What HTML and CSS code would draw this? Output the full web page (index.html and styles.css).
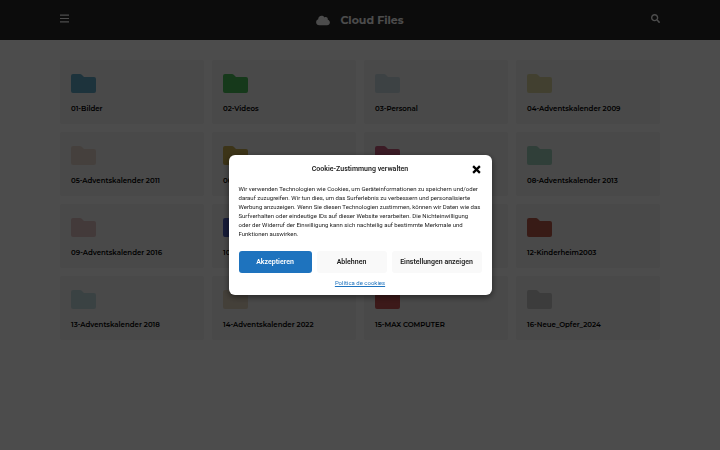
FILE: index.html
```html
<!DOCTYPE html>
<html lang="de">
<head>
<meta charset="utf-8">
<meta name="viewport" content="width=device-width, initial-scale=1">
<title>Cloud Files</title>
<link rel="stylesheet" href="styles.css">
</head>
<body>
<svg class="symbols" aria-hidden="true">
  <symbol id="folder" viewBox="0 0 25 19"><path d="M2 0H9Q10 0 10.700 .7L13 3H23Q25 3 25 5V17Q25 19 23 19H2Q0 19 0 17V2Q0 0 2 0Z"/></symbol>
</svg>
<header class="topbar">
  <div class="topbar-inner">
    <button class="icon-button" type="button" aria-label="Menu"><svg class="menu-icon" viewBox="0 0 8 8"><path d="M0 1H8M0 4H8M0 7H8"/></svg></button>
    <a class="brand" href="#"><svg class="cloud" viewBox="0 0 640 512"><path d="M537.600 226.600c4.100-10.700 6.400-22.400 6.400-34.600 0-53-43-96-96-96-19.700 0-38.100 6-53.300 16.200C367 64.200 315.300 32 256 32c-88.400 0-160 71.600-160 160 0 2.700.1 5.400.2 8.100C40.200 219.800 0 273.200 0 336c0 79.500 64.500 144 144 144h368c70.700 0 128-57.300 128-128 0-61.900-44-113.600-102.400-125.400z"/></svg><span>Cloud Files</span></a>
    <button class="icon-button" type="button" aria-label="Search"><svg class="search-icon" viewBox="0 0 512 512"><path d="M505 442.700L405.300 343c-4.500-4.500-10.600-7-17-7H372c27.600-35.300 44-79.700 44-128C416 93.100 322.900 0 208 0S0 93.100 0 208s93.100 208 208 208c48.300 0 92.700-16.400 128-44v16.300c0 6.400 2.500 12.500 7 17l99.700 99.700c9.400 9.400 24.600 9.400 33.900 0l28.300-28.300c9.400-9.400 9.400-24.600.1-34zM208 336c-70.700 0-128-57.200-128-128 0-70.700 57.200-128 128-128 70.700 0 128 57.200 128 128 0 70.700-57.200 128-128 128z"/></svg></button>
  </div>
</header>
<main class="files">
  <a class="card blue" href="#"><svg class="folder"><use href="#folder"/></svg><span>01-Bilder</span></a>
  <a class="card green" href="#"><svg class="folder"><use href="#folder"/></svg><span>02-Videos</span></a>
  <a class="card ice" href="#"><svg class="folder"><use href="#folder"/></svg><span>03-Personal</span></a>
  <a class="card yellow" href="#"><svg class="folder"><use href="#folder"/></svg><span>04-Adventskalender 2009</span></a>
  <a class="card peach" href="#"><svg class="folder"><use href="#folder"/></svg><span>05-Adventskalender 2011</span></a>
  <a class="card gold" href="#"><svg class="folder"><use href="#folder"/></svg><span>06-Adventskalender</span></a>
  <a class="card pink" href="#"><svg class="folder"><use href="#folder"/></svg><span>07-Adventskalender</span></a>
  <a class="card mint" href="#"><svg class="folder"><use href="#folder"/></svg><span>08-Adventskalender 2013</span></a>
  <a class="card rose" href="#"><svg class="folder"><use href="#folder"/></svg><span>09-Adventskalender 2016</span></a>
  <a class="card indigo" href="#"><svg class="folder"><use href="#folder"/></svg><span>10-Adventskalender</span></a>
  <a class="card ice" href="#"><svg class="folder"><use href="#folder"/></svg><span>11-Adventskalender</span></a>
  <a class="card brick" href="#"><svg class="folder"><use href="#folder"/></svg><span>12-Kinderheim2003</span></a>
  <a class="card aqua" href="#"><svg class="folder"><use href="#folder"/></svg><span>13-Adventskalender 2018</span></a>
  <a class="card sand" href="#"><svg class="folder"><use href="#folder"/></svg><span>14-Adventskalender 2022</span></a>
  <a class="card red" href="#"><svg class="folder"><use href="#folder"/></svg><span>15-MAX COMPUTER</span></a>
  <a class="card gray" href="#"><svg class="folder"><use href="#folder"/></svg><span>16-Neue_Opfer_2024</span></a>
</main>
<div class="overlay">
  <section class="consent" role="dialog" aria-modal="true" aria-labelledby="consent-title">
    <div class="consent-head">
      <h2 id="consent-title">Cookie-Zustimmung verwalten</h2>
      <button class="close" type="button" aria-label="Schließen"><svg viewBox="0 0 8 8"><path d="M1 1L7 7M7 1L1 7"/></svg></button>
    </div>
    <p>Wir verwenden Technologien wie Cookies, um Geräteinformationen zu speichern und/oder darauf zuzugreifen. Wir tun dies, um das Surferlebnis zu verbessern und personalisierte Werbung anzuzeigen. Wenn Sie diesen Technologien zustimmen, können wir Daten wie das Surfverhalten oder eindeutige IDs auf dieser Website verarbeiten. Die Nichteinwilligung oder der Widerruf der Einwilligung kann sich nachteilig auf bestimmte Merkmale und Funktionen auswirken.</p>
    <div class="actions">
      <button class="primary" type="button">Akzeptieren</button>
      <button type="button">Ablehnen</button>
      <button type="button">Einstellungen anzeigen</button>
    </div>
    <a class="policy" href="#">Política de cookies</a>
  </section>
</div>
</body>
</html>
```
FILE: styles.css
```css
* { box-sizing: border-box; }

body {
  margin: 0;
  background: #fff;
  color: #111;
  font-family: Montserrat, Inter, sans-serif;
}

button {
  border: 0;
  padding: 0;
  background: none;
  color: inherit;
  font: inherit;
}

a { color: inherit; text-decoration: none; }

svg { display: block; }

.symbols { display: none; }

.topbar {
  padding: 0 60px;
  background: #282828;
  color: #fff;
}

.topbar-inner {
  display: flex;
  justify-content: space-between;
  max-width: 1200px;
  height: 40px;
  margin: 0 auto;
  padding-top: 14px;
}

.icon-button { align-self: flex-start; }

.menu-icon {
  width: 9px;
  height: 9px;
  fill: none;
  stroke: currentColor;
}

.search-icon { width: 9px; height: 9px; fill: currentColor; }

.brand {
  display: flex;
  align-items: center;
  align-self: flex-start;
  gap: 10px;
  font-size: 11px;
  line-height: 12px;
  font-weight: 700;
}

.cloud { width: 14px; height: 11px; fill: currentColor; }

.files {
  display: grid;
  grid-template-columns: repeat(4, minmax(0, 1fr));
  gap: 8px;
  max-width: 1320px;
  margin: 0 auto;
  padding: 20px 60px;
}

.card {
  display: flex;
  flex-direction: column;
  align-items: flex-start;
  gap: 11px;
  padding: 14px 11px 10px;
  border-radius: 2px;
  background: #f3f3f3;
  font-size: 7px;
  line-height: 10px;
  font-weight: 600;
}

.folder { width: 25px; height: 19px; fill: currentColor; }
.card span { color: #000; }

.blue { color: #62aac8; }
.green { color: #4cbe5a; }
.ice { color: #cbdde5; }
.yellow { color: #dcd8a0; }
.peach { color: #e8d8ce; }
.gold { color: #c9ae50; }
.pink { color: #c55c7e; }
.mint { color: #a2d2be; }
.rose { color: #e2c2c2; }
.indigo { color: #4e5ebd; }
.brick { color: #bd5c4c; }
.aqua { color: #c4dde2; }
.sand { color: #e4d6c0; }
.red { color: #c95454; }
.gray { color: #c8c8c8; }

.overlay {
  position: fixed;
  inset: 0;
  display: flex;
  align-items: center;
  justify-content: center;
  background: rgba(0, 0, 0, .7);
}

.consent {
  width: 263px;
  padding: 9px 10px 8px;
  border-radius: 6px;
  background: #fff;
  box-shadow: 0 2px 6px rgba(0, 0, 0, .5);
  color: #222;
  font-family: Roboto, sans-serif;
}

.consent-head {
  display: grid;
  grid-template-columns: 10px 1fr 10px;
  align-items: center;
  height: 10px;
}

.consent h2 {
  grid-column: 2;
  margin: 0;
  font-size: 7px;
  line-height: 10px;
  font-weight: 600;
  text-align: center;
}

.close svg {
  width: 9px;
  height: 9px;
  fill: none;
  stroke: #000;
  stroke-width: 2;
}

.consent p {
  margin: 10px 0 13px;
  font-size: 6px;
  line-height: 9px;
}

.actions {
  display: grid;
  grid-template-columns: 73px 1fr 90px;
  gap: 5px;
}

.actions button {
  height: 22px;
  border-radius: 3px;
  background: #f9f9f9;
  color: #222;
  font-size: 7px;
  font-weight: 600;
  white-space: nowrap;
}

.actions .primary { background: #1e73be; color: #fff; }

.policy {
  display: block;
  margin-top: 5px;
  color: #1e73be;
  font-size: 6px;
  line-height: 9px;
  text-align: center;
  text-decoration: underline;
}
```
